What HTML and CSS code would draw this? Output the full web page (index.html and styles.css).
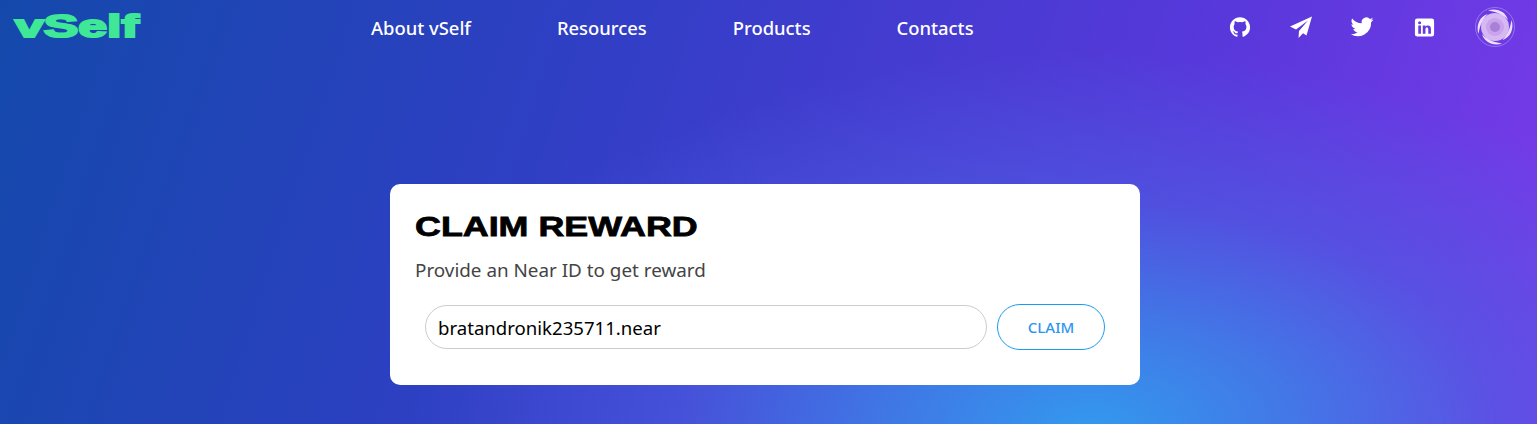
FILE: index.html
```html
<!DOCTYPE html>
<html lang="en">
<head>
  <meta charset="UTF-8" />
  <title>Claim reward - vSelf</title>
  <link rel="stylesheet" href="styles.css">
</head>
<body>
  <header class="topbar">
    <a class="logo" href="#"><span>vSelf</span></a>
    <nav class="menu">
      <a href="#">About vSelf</a>
      <a href="#">Resources</a>
      <a href="#">Products</a>
      <a href="#">Contacts</a>
    </nav>
    <div class="socials">
      <a href="#" class="social">
        <svg viewBox="0 0 24 24" width="22" height="22"><path fill="#fff" d="M12 1.3C5.900 1.300 1 6.200 1 12.300c0 4.900 3.200 9 7.500 10.400.6.100.8-.2.8-.5v-2c-3.100.7-3.700-1.300-3.700-1.300-.5-1.300-1.200-1.600-1.200-1.600-1-.7.1-.7.1-.7 1.100.1 1.700 1.100 1.700 1.100 1 1.700 2.600 1.200 3.200.9.100-.7.400-1.200.7-1.500-2.400-.3-5-1.200-5-5.400 0-1.200.4-2.200 1.100-3-.1-.3-.5-1.400.1-2.900 0 0 .9-.3 3 1.100a10.500 10.500 0 0 1 5.500 0c2.100-1.400 3-1.100 3-1.100.6 1.500.2 2.600.1 2.900.7.800 1.100 1.800 1.100 3 0 4.200-2.600 5.100-5 5.400.4.300.7 1 .7 2v3c0 .3.200.6.800.500C19.800 21.300 23 17.200 23 12.300 23 6.200 18.100 1.300 12 1.300z"/></svg>
      </a>
      <a href="#" class="social">
        <svg viewBox="0 0 24 24" width="24" height="24"><path fill="#fff" d="M23 1.500 1 11.500l6 3L19 5.500 10 16l-.5 7 4.500-4.800 3.500 2.300z"/></svg>
      </a>
      <a href="#" class="social">
        <svg viewBox="0 0 24 24" width="24" height="24"><path fill="#fff" d="M23.500 4.600c-.8.400-1.700.6-2.700.8 1-.6 1.700-1.500 2.100-2.600-.9.500-1.900.9-3 1.200a4.700 4.700 0 0 0-8.100 4.300C7.900 8.100 4.400 6.200 2.100 3.400 .9 5.500 1.500 8.300 3.600 9.700c-.8 0-1.500-.2-2.100-.6 0 2.300 1.600 4.300 3.800 4.700-.7.200-1.400.2-2.100.1.600 1.900 2.300 3.200 4.400 3.300A9.500 9.500 0 0 1 .5 19.100a13.400 13.400 0 0 0 20.600-11.900c.9-.7 1.800-1.600 2.400-2.600z"/></svg>
      </a>
      <a href="#" class="social linkedin">
        <svg viewBox="0 0 24 24" width="23" height="23"><path fill="#fff" fill-rule="evenodd" d="M4.500 2.500h15a2.500 2.500 0 0 1 2.500 2.500v14a2.500 2.500 0 0 1-2.500 2.500h-15A2.500 2.500 0 0 1 2 19V5a2.500 2.500 0 0 1 2.500-2.500zM5.500 10v8.500h2.800V10zM6.900 5.500a1.600 1.600 0 1 0 0 3.200 1.600 1.600 0 0 0 0-3.200zM10.200 10v8.500H13V14c0-1.300.5-2 1.500-2s1.400.700 1.400 2v4.500h2.800v-5.200c0-2.400-1.300-3.500-3.100-3.500-1.300 0-2.100.6-2.600 1.300V10z"/></svg>
      </a>
      <a href="#" class="avatar">
        <svg viewBox="0 0 40 40" width="40" height="40">
          <circle cx="20" cy="20" r="19.500" fill="none" stroke="#d9c4f7" stroke-opacity=".4" stroke-width="1"/>
          <circle cx="20" cy="20" r="14" fill="#d6b8f3"/>
          <circle cx="20" cy="20" r="9" fill="#c9a3ec"/>
          <circle cx="20" cy="20" r="5" fill="#a880d6"/>
          <g fill="#ecdffb">
            <path d="M13 3.500C22 .5 31 5 33 13c-3-4-10-8-20-9.500z"/>
            <path d="M13 3.500C22 .5 31 5 33 13c-3-4-10-8-20-9.500z" transform="rotate(90 20 20)"/>
            <path d="M13 3.500C22 .5 31 5 33 13c-3-4-10-8-20-9.500z" transform="rotate(180 20 20)"/>
            <path d="M13 3.500C22 .5 31 5 33 13c-3-4-10-8-20-9.500z" transform="rotate(270 20 20)"/>
          </g>
        </svg>
      </a>
    </div>
  </header>

  <main class="content">
    <section class="card">
      <h1 class="cardTitle"><span>CLAIM REWARD</span></h1>
      <p class="cardText">Provide an Near ID to get reward</p>
      <form class="claimForm">
        <input class="nearInput" type="text" value="bratandronik235711.near" />
        <button class="claimBtn" type="button">CLAIM</button>
      </form>
    </section>
  </main>
</body>
</html>
```

FILE: styles.css
```css
html, body {
  height: 100%;
}
body {
  margin: 0;
  overflow: hidden;
  font-family: "Noto Sans", "Open Sans", sans-serif;
  background:
    radial-gradient(ellipse 680px 380px at 1090px 430px, #3399ee 0%, rgba(61, 130, 232, .85) 30%, rgba(75, 95, 225, .6) 60%, rgba(80, 70, 225, 0) 100%),
    linear-gradient(108deg, #1449ab 0%, #2f3fc4 35%, #5a38dc 75%, #7a3bea 100%);
}
.topbar {
  display: flex;
  align-items: center;
  height: 54px;
  padding: 0 22px 2px 15px;
}
.logo {
  width: 356px;
  text-decoration: none;
}
.logo span {
  display: inline-block;
  font: 900 31px "Liberation Sans", sans-serif;
  color: #3ee896;
  -webkit-text-stroke: 2px #3ee896;
  transform: scaleX(1.67);
  transform-origin: left center;
}
.menu {
  display: flex;
  gap: 86px;
}
.menu a {
  color: #fff;
  font-size: 18.4px;
  font-weight: 500;
  text-decoration: none;
}
.socials {
  display: flex;
  align-items: center;
  margin-left: auto;
}
.social {
  display: flex;
  justify-content: center;
  width: 24px;
  margin-right: 37px;
}
.linkedin {
  margin-left: 1px;
  margin-right: 36px;
}
.avatar {
  display: flex;
  margin-left: 3px;
}
.content {
  display: flex;
  justify-content: center;
  padding: 128px 7px 0 0;
}
.card {
  box-sizing: border-box;
  width: 750px;
  height: 201px;
  padding: 22px 25px;
  background: #fff;
  border-radius: 10px;
}
.cardTitle {
  margin: 0;
  line-height: 36px;
}
.cardTitle span {
  display: inline-block;
  font: 900 28px/36px "Liberation Sans", sans-serif;
  color: #000;
  -webkit-text-stroke: .8px #000;
  transform: scaleX(1.28);
  transform-origin: left center;
}
.cardText {
  margin: 12px 0 0;
  font-size: 18.85px;
  line-height: 26px;
  color: #444;
}
.claimForm {
  display: flex;
  align-items: center;
  gap: 10px;
  margin: 21px 0 0 10px;
}
.nearInput {
  box-sizing: border-box;
  width: 562px;
  height: 44px;
  padding: 0 12px;
  border: 1px solid #ccc;
  border-radius: 22px;
  outline: none;
  font-family: inherit;
  font-size: 18.6px;
  color: #000;
}
.claimBtn {
  box-sizing: border-box;
  width: 108px;
  height: 46px;
  border: 1px solid #1a9cf0;
  border-radius: 23px;
  background: #fff;
  color: #2f96ee;
  font-family: inherit;
  font-size: 15px;
  font-weight: 500;
}
```
